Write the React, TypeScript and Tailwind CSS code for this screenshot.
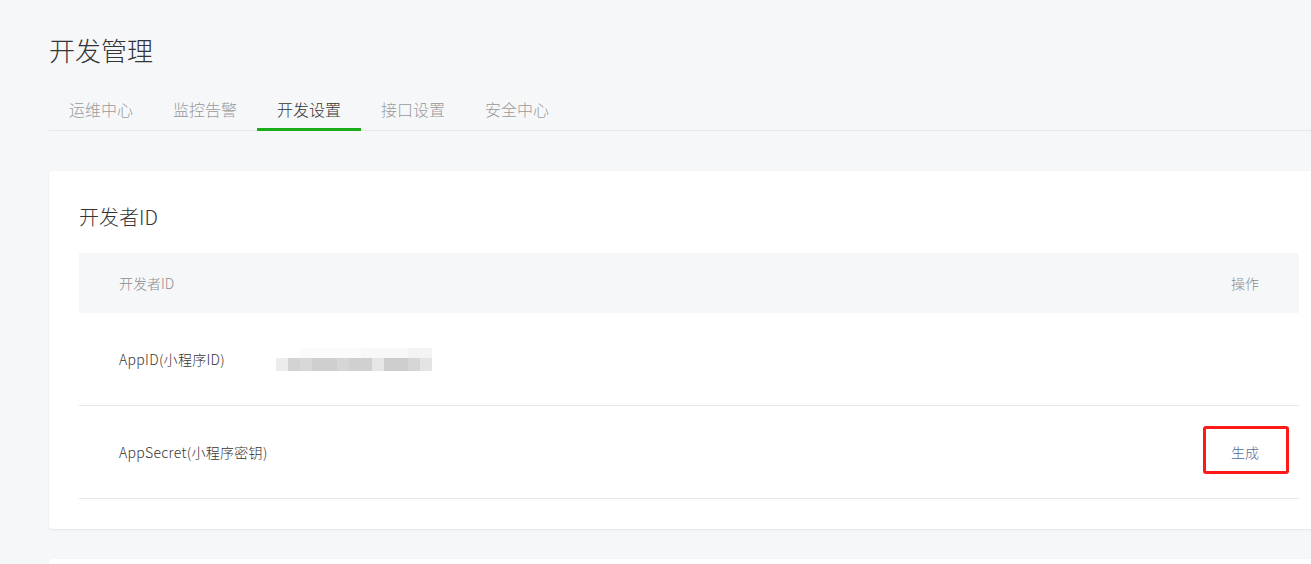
const tabs = ["运维中心", "监控告警", "开发设置", "接口设置", "安全中心"];

// pixelated (blurred) app id value
const blurBlocks = [
  "w-[12px] bg-[#ececec]",
  "w-[12px] bg-[#d3d3d3]",
  "w-[12px] bg-[#d8d8d8]",
  "w-[25px] bg-[#cfcfcf]",
  "w-[12px] bg-[#d6d6d6]",
  "w-[23px] bg-[#d0d0d0]",
  "w-[12px] bg-[#e6e6e6]",
  "w-[24px] bg-[#cdcdcd]",
  "w-[12px] bg-[#d6d6d6]",
  "w-[12px] bg-[#e4e4e4]",
];

function BlurredValue() {
  return (
    <div className="flex flex-col">
      <div className="flex h-[10px]">
        <div className="w-[24px]" />
        <div className="w-[61px] bg-[#fbfbfb]" />
        <div className="w-[47px] bg-[#f8f8f8]" />
        <div className="w-[24px] bg-[#f3f3f3]" />
      </div>
      <div className="flex h-[13px]">
        {blurBlocks.map((cls, i) => (
          <div key={i} className={cls} />
        ))}
      </div>
    </div>
  );
}

export default function App() {
  return (
    <div
      className="h-screen overflow-hidden bg-[#f6f7f9] font-light text-[#353535]"
      style={{ fontFamily: '"Noto Sans CJK SC", "Noto Sans", sans-serif' }}
    >
      <div className="pl-[49px] pt-[32px]">
        <h1 className="text-[26px] leading-[36px] font-light">开发管理</h1>

        <div className="mt-[19px] flex border-b border-[#e7e7eb]">
          {tabs.map((t) => (
            <div
              key={t}
              className={
                t === "开发设置"
                  ? "-mb-px flex h-[44px] items-center px-5 text-base text-[#353535] shadow-[inset_0_-3px_0_#1aad19]"
                  : "-mb-px flex h-[44px] items-center px-5 text-base text-[#9a9a9a]"
              }
            >
              {t}
            </div>
          ))}
        </div>

        <div className="mt-[40px] w-[1280px] rounded bg-white px-[30px] pt-[32px] pb-[30px] shadow-[0_1px_2px_rgba(0,0,0,0.08)]">
          <h2 className="text-[20px] leading-[28px] font-light">开发者ID</h2>

          <div className="mt-[22px]">
            <div className="flex h-[60px] items-center justify-between bg-[#f6f7f9] px-10 text-sm text-[#8d8d8d]">
              <span>开发者ID</span>
              <span>操作</span>
            </div>

            <div className="flex h-[93px] items-center border-b border-[#e7e7eb] px-10 text-sm">
              <span className="w-[157px] tracking-[0.3px]">AppID(小程序ID)</span>
              <BlurredValue />
            </div>

            <div className="flex h-[93px] items-center justify-between border-b border-[#e7e7eb] px-10 text-sm">
              <span className="tracking-[0.3px]">AppSecret(小程序密钥)</span>
              <a className="relative cursor-pointer leading-5 text-[#576b95]">
                生成
                <span className="absolute -left-[28px] -right-[30px] -top-[16px] -bottom-[12px] rounded-[3px] border-[3px] border-[#ff1a1a]" />
              </a>
            </div>
          </div>
        </div>

        <div className="mt-[30px] h-[40px] w-[1280px] rounded bg-white shadow-[0_1px_2px_rgba(0,0,0,0.08)]" />
      </div>
    </div>
  );
}
